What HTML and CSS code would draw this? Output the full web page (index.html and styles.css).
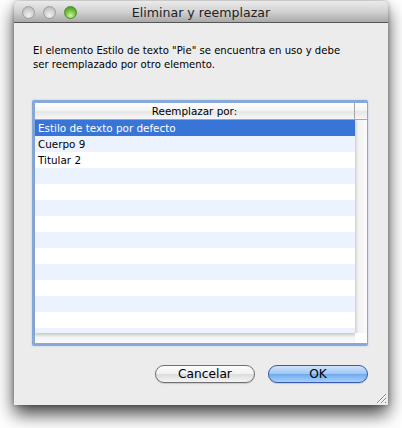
FILE: index.html
```html
<!DOCTYPE html>
<html>
	<head>
		<meta charset="UTF-8">
		<title>Eliminar y reemplazar</title>
		<link rel="stylesheet" href="styles.css">
	</head>
	<body>
		<div class="window">
			<div class="titlebar">
				<div class="lights">
					<span class="light"></span>
					<span class="light"></span>
					<span class="light zoom"></span>
				</div>
				<div class="title">Eliminar y reemplazar</div>
				<div></div>
			</div>

			<div class="content">
				<p class="msg">El elemento Estilo de texto "Pie" se encuentra en uso y debe<br>ser reemplazado por otro elemento.</p>

				<div class="list">
					<div class="table">
						<div class="thead">Reemplazar por:</div>
						<div class="thead-corner"></div>
						<ul class="rows">
							<li class="sel">Estilo de texto por defecto</li>
							<li>Cuerpo 9</li>
							<li>Titular 2</li>
							<li></li>
							<li></li>
							<li></li>
							<li></li>
							<li></li>
							<li></li>
							<li></li>
							<li></li>
							<li></li>
							<li></li>
							<li></li>
						</ul>
						<div class="vscroll"></div>
						<div class="hscroll"></div>
						<div class="corner"></div>
					</div>
				</div>

				<div class="buttons">
					<button class="btn">Cancelar</button>
					<button class="btn default">OK</button>
				</div>
			</div>

			<svg class="grip" width="12" height="12" viewBox="0 0 12 12">
				<path d="M11 2 L2 11 M11 6 L6 11 M11 10 L10 11" stroke="#8a8a8a" stroke-width="1"/>
				<path d="M11 3 L3 11 M11 7 L7 11" stroke="#ffffff" stroke-width="1"/>
			</svg>
		</div>
	</body>
</html>
```

FILE: styles.css
```css
html,body{
	height:428px;
}
body{
	margin:0;
	background:#fff;
	font-family:"DejaVu Sans","Lucida Grande",sans-serif;
	color:#000;
	overflow:hidden;
}
.window{
	position:relative;
	width:374px;
	height:404px;
	margin:1px 0 0 14px;
	background:#ececec;
	border-radius:5px 5px 0 0;
	box-shadow:0 9px 18px rgba(0,0,0,.75), 0 0 4px rgba(0,0,0,.3);
	display:flex;
	flex-direction:column;
}

/* title bar */
.titlebar{
	height:21px;
	border-bottom:1px solid #555;
	border-radius:5px 5px 0 0;
	background:linear-gradient(#ebebeb,#d2d2d2 50%,#a9a9a9);
	display:grid;
	grid-template-columns:1fr auto 1fr;
	align-items:center;
}
.lights{
	display:flex;
	gap:8px;
	padding-left:8px;
	padding-top:1px;
}
.light{
	width:11px;
	height:11px;
	border-radius:50%;
	border:1px solid #9d9d9d;
	background:radial-gradient(circle at 50% 75%,#f2f2f2 0,#d4d4d4 45%,#b4b4b4 100%);
}
.light.zoom{
	border-color:#4d8a27;
	background:radial-gradient(circle at 50% 78%,#d3f5a4 0,#79c744 45%,#3f8f1d 100%);
}
.title{
	font-size:12.6px;
	color:#222;
	padding-top:1px;
}

/* body */
.content{
	display:flex;
	flex-direction:column;
	padding:21px 20px 0 18px;
}
.msg{
	margin:0 0 0 1px;
	font-size:10.1px;
	line-height:14px;
	white-space:nowrap;
}

.list{
	margin-top:28px;
	height:240px;
	border:3px solid #87a9d9;
	border-radius:2px;
	box-shadow:0 0 2px #a9c3e8;
	background:#fff;
}
.table{
	display:grid;
	grid-template-columns:320px 12px;
	grid-template-rows:17px 213px 10px;
	height:240px;
}
.thead{
	border-bottom:1px solid #a7a7a7;
	border-right:1px solid #a7a7a7;
	background:linear-gradient(#fff,#f4f4f4 45%,#e6e6e6 55%,#f8f8f8);
	font-size:10.4px;
	line-height:16px;
	text-align:center;
}
.thead-corner{
	border-bottom:1px solid #a7a7a7;
	background:linear-gradient(#fff,#f4f4f4 45%,#e6e6e6 55%,#f8f8f8);
}
.rows{
	margin:0;
	padding:0;
	list-style:none;
	overflow:hidden;
	box-shadow:0 2px 3px rgba(0,0,0,.12);
	position:relative;
}
.rows li{
	height:16px;
	line-height:16px;
	font-size:10.4px;
	padding-left:3px;
	background:#fff;
}
.rows li:nth-child(even){
	background:#edf3fe;
}
.rows li.sel{
	background:#3875d7;
	color:#fff;
}
.vscroll{
	background:linear-gradient(90deg,#dcdcdc,#f3f3f3 30%,#fafafa);
}
.hscroll{
	background:linear-gradient(#e2e2e2,#f4f4f4 40%,#fafafa);
}
.corner{
	background:#fff;
}

/* buttons */
.buttons{
	display:flex;
	justify-content:flex-end;
	gap:13px;
	margin-top:19px;
}
.btn{
	width:100px;
	height:18px;
	padding:0;
	border:1px solid #707070;
	border-radius:9px;
	background:linear-gradient(#fdfdfd,#f0f0f0 50%,#dcdcdc 51%,#f4f4f4);
	font-family:"DejaVu Sans","Lucida Grande",sans-serif;
	font-size:12.2px;
	line-height:16px;
	color:#000;
	box-shadow:0 1px 1px rgba(0,0,0,.15);
}
.btn.default{
	border-color:#3c58a8;
	background:linear-gradient(#cfe3fb,#9cc6f3 50%,#6fa9ec 51%,#a6d2fb);
}

.grip{
	position:absolute;
	right:1px;
	bottom:1px;
}
```
